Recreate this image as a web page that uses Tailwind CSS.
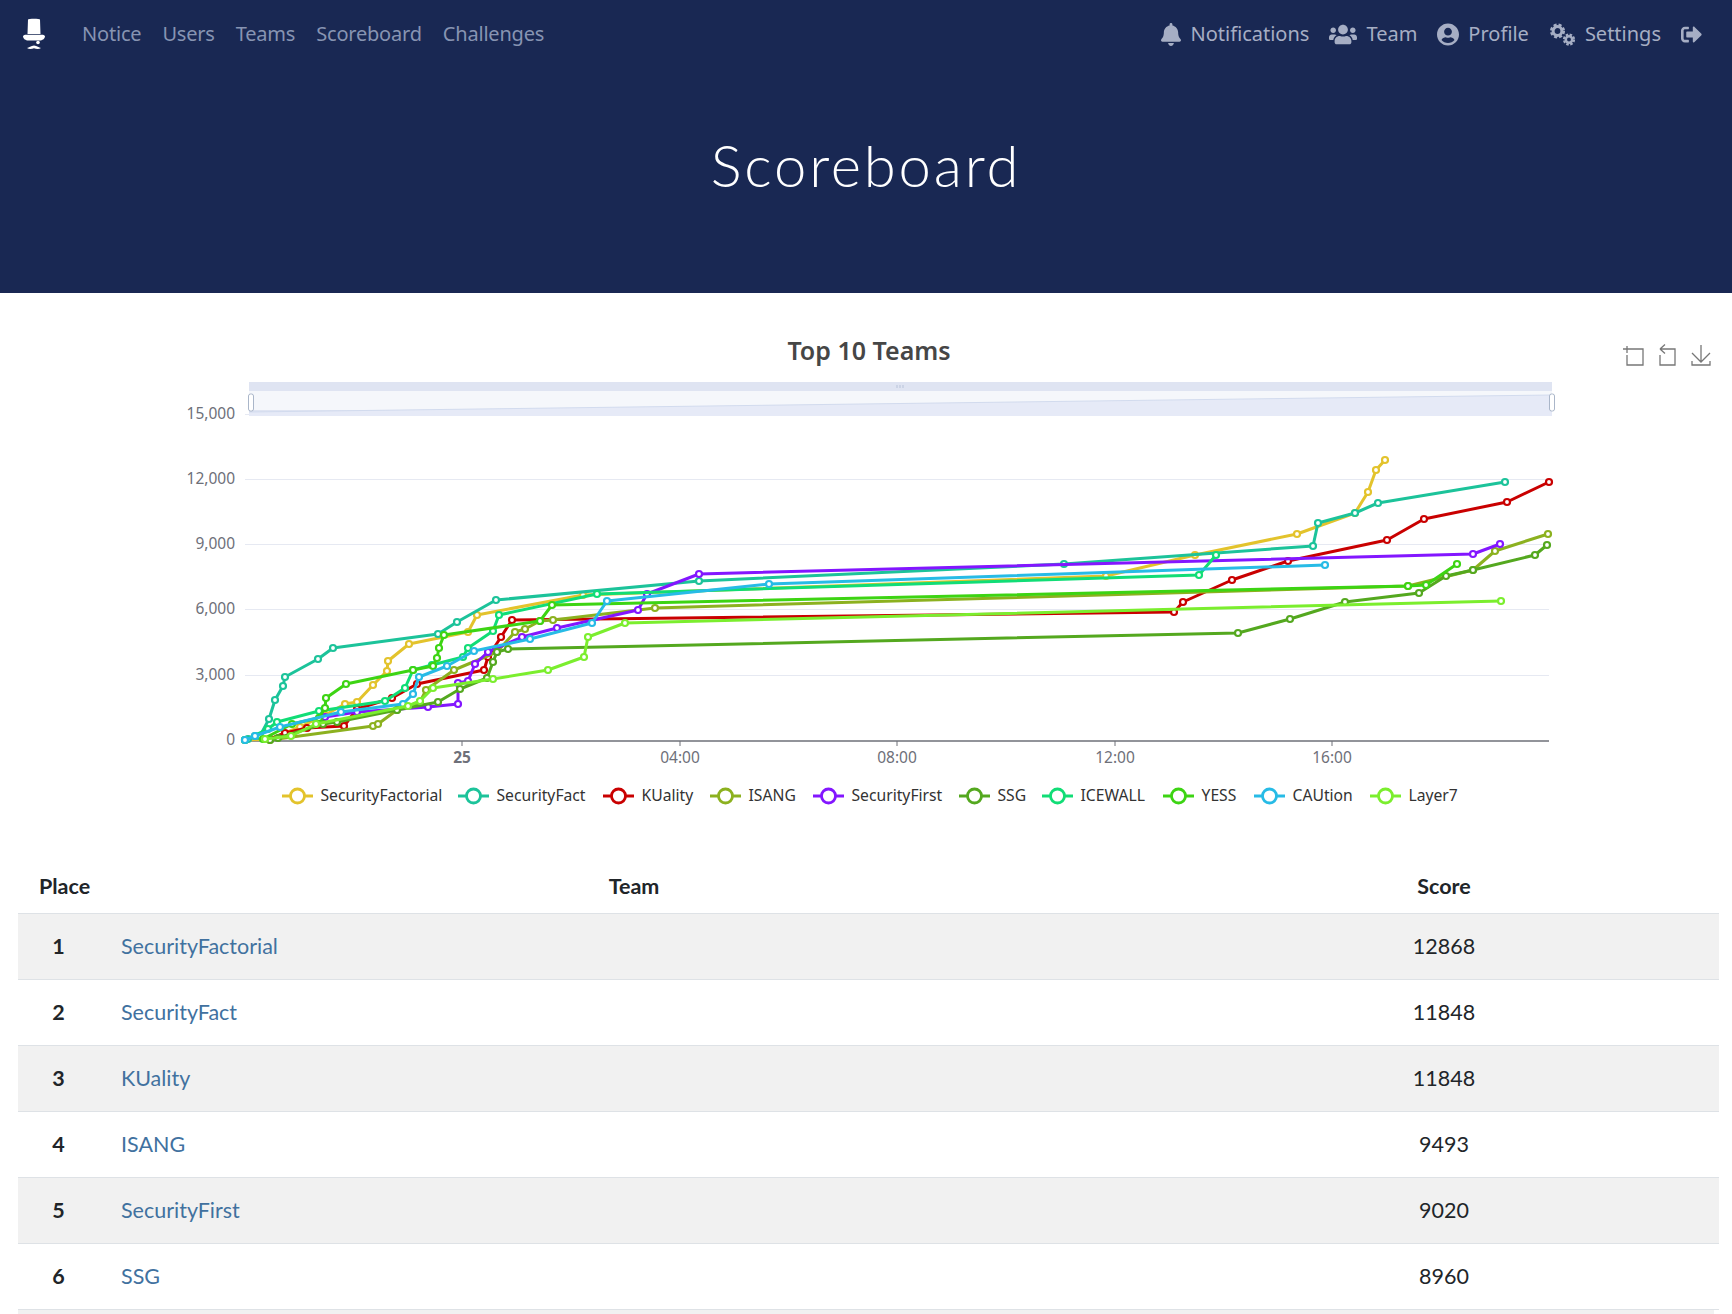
<!DOCTYPE html>
<html lang="en">
<head>
  <meta charset="UTF-8" />
  <title>Scoreboard</title>
  <script src="https://cdn.jsdelivr.net/npm/@tailwindcss/browser@4"></script>
</head>
<body class="bg-white text-[#212529] font-['Lato',sans-serif] overflow-hidden h-[1314px]">
  <header class="bg-[#192853] h-[293px] flex flex-col">
    <nav class="h-[68px] flex items-center justify-between pl-[23px] pr-[30px] font-['Noto_Sans',sans-serif] text-[20px]">
      <div class="flex items-center">
        <svg class="w-[22px] h-[32px] mr-[37px]" viewBox="0 0 22 32" fill="#fff">
          <path d="M5 1.500C5 .6 17 .6 17 1.500L17.500 16H4.500Z" />
          <path d="M0 18c1-1.500 3-1.500 4.500-1.200h13c1.500-.3 3.500-.3 4.500 1.200 0 3-3 4.500-5 4.500H5c-2 0-5-1.500-5-4.500Z" />
          <circle cx="15" cy="24.500" r="1.800" />
          <path d="M4 30c2 0 4-2.500 7-2.500s5 2.500 7 2.500c-2 1.500-5 1-7 .2-2 .8-5 1.300-7-.2Z" />
        </svg>
        <div class="flex items-center gap-[21px] text-[#8794b2] tracking-[-0.2px]">
          <a>Notice</a>
          <a>Users</a>
          <a>Teams</a>
          <a>Scoreboard</a>
          <a>Challenges</a>
        </div>
      </div>
      <div class="flex items-center gap-[20px] text-[#a6aec4]">
        <a class="flex items-center gap-[9px]">
          <svg class="w-[20px] h-[23px]" viewBox="0 0 448 512" fill="currentColor"><path d="M224 512c35.320 0 63.970-28.650 63.970-64H160.030c0 35.350 28.650 64 63.970 64zm215.390-149.710c-19.320-20.760-55.470-51.990-55.470-154.290 0-77.700-54.480-139.900-127.940-155.160V32c0-17.670-14.320-32-31.980-32s-31.980 14.330-31.980 32v20.840C118.560 68.100 64.080 130.300 64.080 208c0 102.300-36.150 133.530-55.470 154.290-6 6.450-8.660 14.160-8.610 21.710.11 16.400 12.980 32 32.100 32h383.800c19.120 0 32-15.600 32.100-32 .05-7.550-2.610-15.270-8.610-21.710z"/></svg>
          Notifications
        </a>
        <a class="flex items-center gap-[9px]">
          <svg class="w-[28px] h-[23px]" viewBox="0 0 640 512" fill="currentColor"><path d="M96 224c35.300 0 64-28.700 64-64s-28.700-64-64-64-64 28.700-64 64 28.700 64 64 64zm448 0c35.300 0 64-28.700 64-64s-28.700-64-64-64-64 28.700-64 64 28.700 64 64 64zm32 32h-64c-17.600 0-33.500 7.100-45.100 18.600 40.300 22.100 68.900 62 75.100 109.400h66c17.700 0 32-14.300 32-32v-32c0-35.300-28.700-64-64-64zm-256 0c61.900 0 112-50.100 112-112S381.900 32 320 32 208 82.100 208 144s50.100 112 112 112zm76.800 32h-8.300c-20.800 10-43.900 16-68.500 16s-47.600-6-68.500-16h-8.300C179.600 288 128 339.600 128 403.200V432c0 26.500 21.500 48 48 48h288c26.500 0 48-21.500 48-48v-28.800c0-63.600-51.600-115.200-115.200-115.200zm-223.700-13.400C161.500 263.100 145.600 256 128 256H64c-35.300 0-64 28.700-64 64v32c0 17.700 14.300 32 32 32h65.900c6.300-47.400 34.900-87.300 75.200-109.400z"/></svg>
          Team
        </a>
        <a class="flex items-center gap-[9px]">
          <svg class="w-[22px] h-[23px]" viewBox="0 0 496 512" fill="currentColor"><path d="M248 8C111 8 0 119 0 256s111 248 248 248 248-111 248-248S385 8 248 8zm0 96c48.600 0 88 39.400 88 88s-39.400 88-88 88-88-39.400-88-88 39.400-88 88-88zm0 344c-58.700 0-111.300-26.600-146.500-68.200 18.800-35.400 55.600-59.800 98.500-59.800 2.400 0 4.800.4 7.100 1.100 13 4.200 26.600 6.900 40.900 6.900 14.300 0 28-2.700 40.900-6.900 2.300-.7 4.700-1.100 7.100-1.100 42.900 0 79.700 24.400 98.500 59.800C359.300 421.400 306.700 448 248 448z"/></svg>
          Profile
        </a>
        <a class="flex items-center gap-[9px]">
          <svg class="w-[27px] h-[23px]" viewBox="0 0 27 23" fill="none" stroke="currentColor">
            <circle cx="8.500" cy="8" r="4.400" stroke-width="3" />
            <circle cx="8.500" cy="8" r="6.300" stroke-width="2.500" stroke-dasharray="3 2" />
            <circle cx="20" cy="16.500" r="3.200" stroke-width="2.500" />
            <circle cx="20" cy="16.500" r="5" stroke-width="2.200" stroke-dasharray="2.500 1.430" />
          </svg>
          Settings
        </a>
        <a>
          <svg class="w-[21px] h-[23px]" viewBox="0 0 512 512" fill="currentColor"><path d="M497 273L329 441c-15 15-41 4.500-41-17v-96H152c-13.300 0-24-10.700-24-24v-96c0-13.300 10.700-24 24-24h136V88c0-21.400 25.900-32 41-17l168 168c9.300 9.400 9.300 24.600 0 34zM192 436v-40c0-6.600-5.400-12-12-12H96c-17.700 0-32-14.300-32-32V160c0-17.700 14.300-32 32-32h84c6.600 0 12-5.400 12-12V76c0-6.600-5.400-12-12-12H96c-53 0-96 43-96 96v192c0 53 43 96 96 96h84c6.600 0 12-5.400 12-12z"/></svg>
        </a>
      </div>
    </nav>
    <h1 class="text-center text-white font-light text-[58px] leading-none mt-[68px] tracking-[2.800px] font-['Lato',sans-serif]">Scoreboard</h1>
  </header>

  <main class="px-[18px]">
    <div class="-mx-[18px] h-[574px]">
      <svg id="chart" class="block" width="1732" height="574" viewBox="0 293 1732 574"></svg>
    </div>

    <table class="w-[1701px] table-fixed border-collapse text-[21.500px]">
      <colgroup>
        <col class="w-[81px]" />
        <col class="w-[1070px]" />
        <col />
      </colgroup>
      <thead>
        <tr class="h-[46px] border-b border-[#dee2e6]">
          <th class="text-left pl-[21px] pb-2 font-bold">Place</th>
          <th class="pb-2 font-bold">Team</th>
          <th class="pb-2 font-bold">Score</th>
        </tr>
      </thead>
      <tbody>
        <tr class="h-[66px] border-b border-[#dee2e6] bg-[#f1f1f1]"><td class="text-center font-bold">1</td><td class="pl-[22px]"><a class="text-[#41719f]">SecurityFactorial</a></td><td class="text-center">12868</td></tr>
        <tr class="h-[66px] border-b border-[#dee2e6]"><td class="text-center font-bold">2</td><td class="pl-[22px]"><a class="text-[#41719f]">SecurityFact</a></td><td class="text-center">11848</td></tr>
        <tr class="h-[66px] border-b border-[#dee2e6] bg-[#f1f1f1]"><td class="text-center font-bold">3</td><td class="pl-[22px]"><a class="text-[#41719f]">KUality</a></td><td class="text-center">11848</td></tr>
        <tr class="h-[66px] border-b border-[#dee2e6]"><td class="text-center font-bold">4</td><td class="pl-[22px]"><a class="text-[#41719f]">ISANG</a></td><td class="text-center">9493</td></tr>
        <tr class="h-[66px] border-b border-[#dee2e6] bg-[#f1f1f1]"><td class="text-center font-bold">5</td><td class="pl-[22px]"><a class="text-[#41719f]">SecurityFirst</a></td><td class="text-center">9020</td></tr>
        <tr class="h-[66px] border-b border-[#dee2e6]"><td class="text-center font-bold">6</td><td class="pl-[22px]"><a class="text-[#41719f]">SSG</a></td><td class="text-center">8960</td></tr>
      </tbody>
    </table>
    <div class="h-[5px] bg-[#f1f1f1]"></div>
  </main>

  <script>
    // page coordinates, same as the echarts canvas
    const series = [
      { name: 'SecurityFactorial', color: '#e3c32c', lx: 282, pts: [[245,740],[270,739],[300,727],[325,715],[345,704],[357,702],[373,685],[387,671],[388,661],[409,644],[468,632],[477,615],[583,595],[1106,576],[1195,555],[1297,534],[1355,513],[1368,492],[1376,470],[1385,460]] },
      { name: 'SecurityFact', color: '#1cc39a', lx: 458, pts: [[245,740],[248,739],[255,736],[260,736],[269,719],[275,700],[283,686],[285,677],[318,659],[333,648],[438,634],[457,622],[496,600],[699,581],[1064,564],[1313,546],[1318,523],[1355,513],[1378,503],[1505,482]] },
      { name: 'KUality', color: '#c90000', lx: 603, pts: [[270,739],[285,733],[307,728],[344,726],[357,709],[392,698],[417,684],[484,670],[488,657],[501,637],[512,620],[1174,612],[1183,602],[1232,580],[1288,561],[1387,540],[1424,519],[1507,502],[1549,482]] },
      { name: 'ISANG', color: '#8cb11f', lx: 710, pts: [[270,740],[373,726],[378,724],[397,710],[420,702],[426,690],[454,670],[497,652],[515,632],[525,629],[540,621],[553,620],[655,608],[1408,586],[1473,570],[1495,551],[1548,534]] },
      { name: 'SecurityFirst', color: '#8316ff', lx: 813, pts: [[325,717],[357,712],[428,707],[458,704],[458,683],[468,681],[475,664],[488,652],[522,637],[557,628],[638,610],[647,594],[699,574],[1473,554],[1500,544]] },
      { name: 'SSG', color: '#54a81f', lx: 959, pts: [[270,740],[278,738],[323,724],[337,722],[397,710],[438,702],[460,689],[487,678],[493,662],[497,652],[508,649],[1238,633],[1290,619],[1345,602],[1419,593],[1446,576],[1473,570],[1535,555],[1547,545]] },
      { name: 'ICEWALL', color: '#11dd76', lx: 1042, pts: [[245,740],[268,729],[277,722],[319,711],[385,701],[405,688],[413,670],[432,665],[463,657],[468,648],[493,631],[499,615],[597,594],[1199,575],[1216,555]] },
      { name: 'YESS', color: '#3dd413', lx: 1163, pts: [[263,739],[292,724],[319,718],[325,708],[326,698],[346,684],[413,670],[433,666],[437,658],[439,648],[444,635],[540,621],[552,605],[1408,586],[1426,585],[1457,564]] },
      { name: 'CAUtion', color: '#27bbe6', lx: 1254, pts: [[245,740],[255,736],[280,727],[341,712],[403,704],[413,694],[419,677],[447,666],[474,651],[530,639],[592,623],[607,601],[769,584],[1325,565]] },
      { name: 'Layer7', color: '#7bee2e', lx: 1370, pts: [[265,739],[291,736],[316,724],[408,706],[420,701],[433,688],[493,679],[548,670],[584,657],[588,637],[625,623],[1501,601]] }
    ];

    const svg = document.getElementById('chart');
    const NS = 'http://www.w3.org/2000/svg';
    const FONT = "'Noto Sans', sans-serif";

    function add(tag, attrs, text) {
      const el = document.createElementNS(NS, tag);
      Object.entries(attrs).forEach(([k, v]) => el.setAttribute(k, v));
      if (text) el.textContent = text;
      svg.appendChild(el);
      return el;
    }

    add('text', { x: 869, y: 360, 'text-anchor': 'middle', fill: '#464646', 'font-size': 25, 'font-weight': 600, 'font-family': FONT }, 'Top 10 Teams');

    // grid and y axis
    [[741, '0'], [676, '3,000'], [610, '6,000'], [545, '9,000'], [480, '12,000'], [415, '15,000']].forEach(([y, label]) => {
      if (y !== 741) add('line', { x1: 245, x2: 1549, y1: y - 0.5, y2: y - 0.5, stroke: '#e6e9f2', 'stroke-width': 1 });
      add('text', { x: 235, y: y + 3.5, 'text-anchor': 'end', fill: '#6e7079', 'font-size': 15.500, 'font-family': FONT }, label);
    });

    // data zoom
    add('rect', { x: 249, y: 382, width: 1303, height: 34, fill: '#dfe4f2' });
    add('rect', { x: 249, y: 391, width: 1303, height: 19, fill: '#f5f7fb' });
    add('polygon', { points: '249,412 1552,395 1552,416 249,416', fill: '#e6eaf7' });
    add('line', { x1: 249, y1: 412, x2: 1552, y2: 395, stroke: '#d2dbee', 'stroke-width': 1 });
    add('rect', { x: 248.5, y: 394, width: 5, height: 17, rx: 2, fill: '#fff', stroke: '#aab6c9', 'stroke-width': 1 });
    add('rect', { x: 1549.5, y: 394, width: 5, height: 17, rx: 2, fill: '#fff', stroke: '#aab6c9', 'stroke-width': 1 });
    add('path', { d: 'M897 385v3M900 385v3M903 385v3', stroke: '#b8c3d9', 'stroke-width': 1 });

    // x axis
    add('line', { x1: 245, x2: 1549, y1: 741, y2: 741, stroke: '#6e7079', 'stroke-width': 1.500 });
    [[462, '25', 700], [680, '04:00', 400], [897, '08:00', 400], [1115, '12:00', 400], [1332, '16:00', 400]].forEach(([x, label, weight]) => {
      add('line', { x1: x, x2: x, y1: 741, y2: 746, stroke: '#6e7079', 'stroke-width': 1 });
      add('text', { x: x, y: 763, 'text-anchor': 'middle', fill: '#6e7079', 'font-size': 15.500, 'font-weight': weight, 'font-family': FONT }, label);
    });

    // series
    series.forEach(s => {
      add('polyline', { points: s.pts.map(p => p.join(',')).join(' '), fill: 'none', stroke: s.color, 'stroke-width': 3, 'stroke-linejoin': 'round' });
      s.pts.forEach(([x, y]) => add('circle', { cx: x, cy: y, r: 3, fill: '#fff', stroke: s.color, 'stroke-width': 2.200 }));
    });

    // legend
    series.forEach(s => {
      add('line', { x1: s.lx, x2: s.lx + 31, y1: 796, y2: 796, stroke: s.color, 'stroke-width': 3 });
      add('circle', { cx: s.lx + 15.500, cy: 796, r: 7, fill: '#fff', stroke: s.color, 'stroke-width': 2.800 });
      add('text', { x: s.lx + 38.500, y: 801, fill: '#333', 'font-size': 15.700, 'font-family': FONT }, s.name);
    });

    // toolbox
    const tools = [
      'M1623 349h7M1627 346v7M1630 349h13v16h-16v-10',
      'M1660 349h15v16h-15v-10M1660 349l5-4.500M1660 349l5 4.500',
      'M1692 361v4h18v-4M1701 345v17M1692 353l9 9 9-9'
    ];
    tools.forEach(d => add('path', { d, fill: 'none', stroke: '#777', 'stroke-width': 1.300 }));
  </script>
</body>
</html>
